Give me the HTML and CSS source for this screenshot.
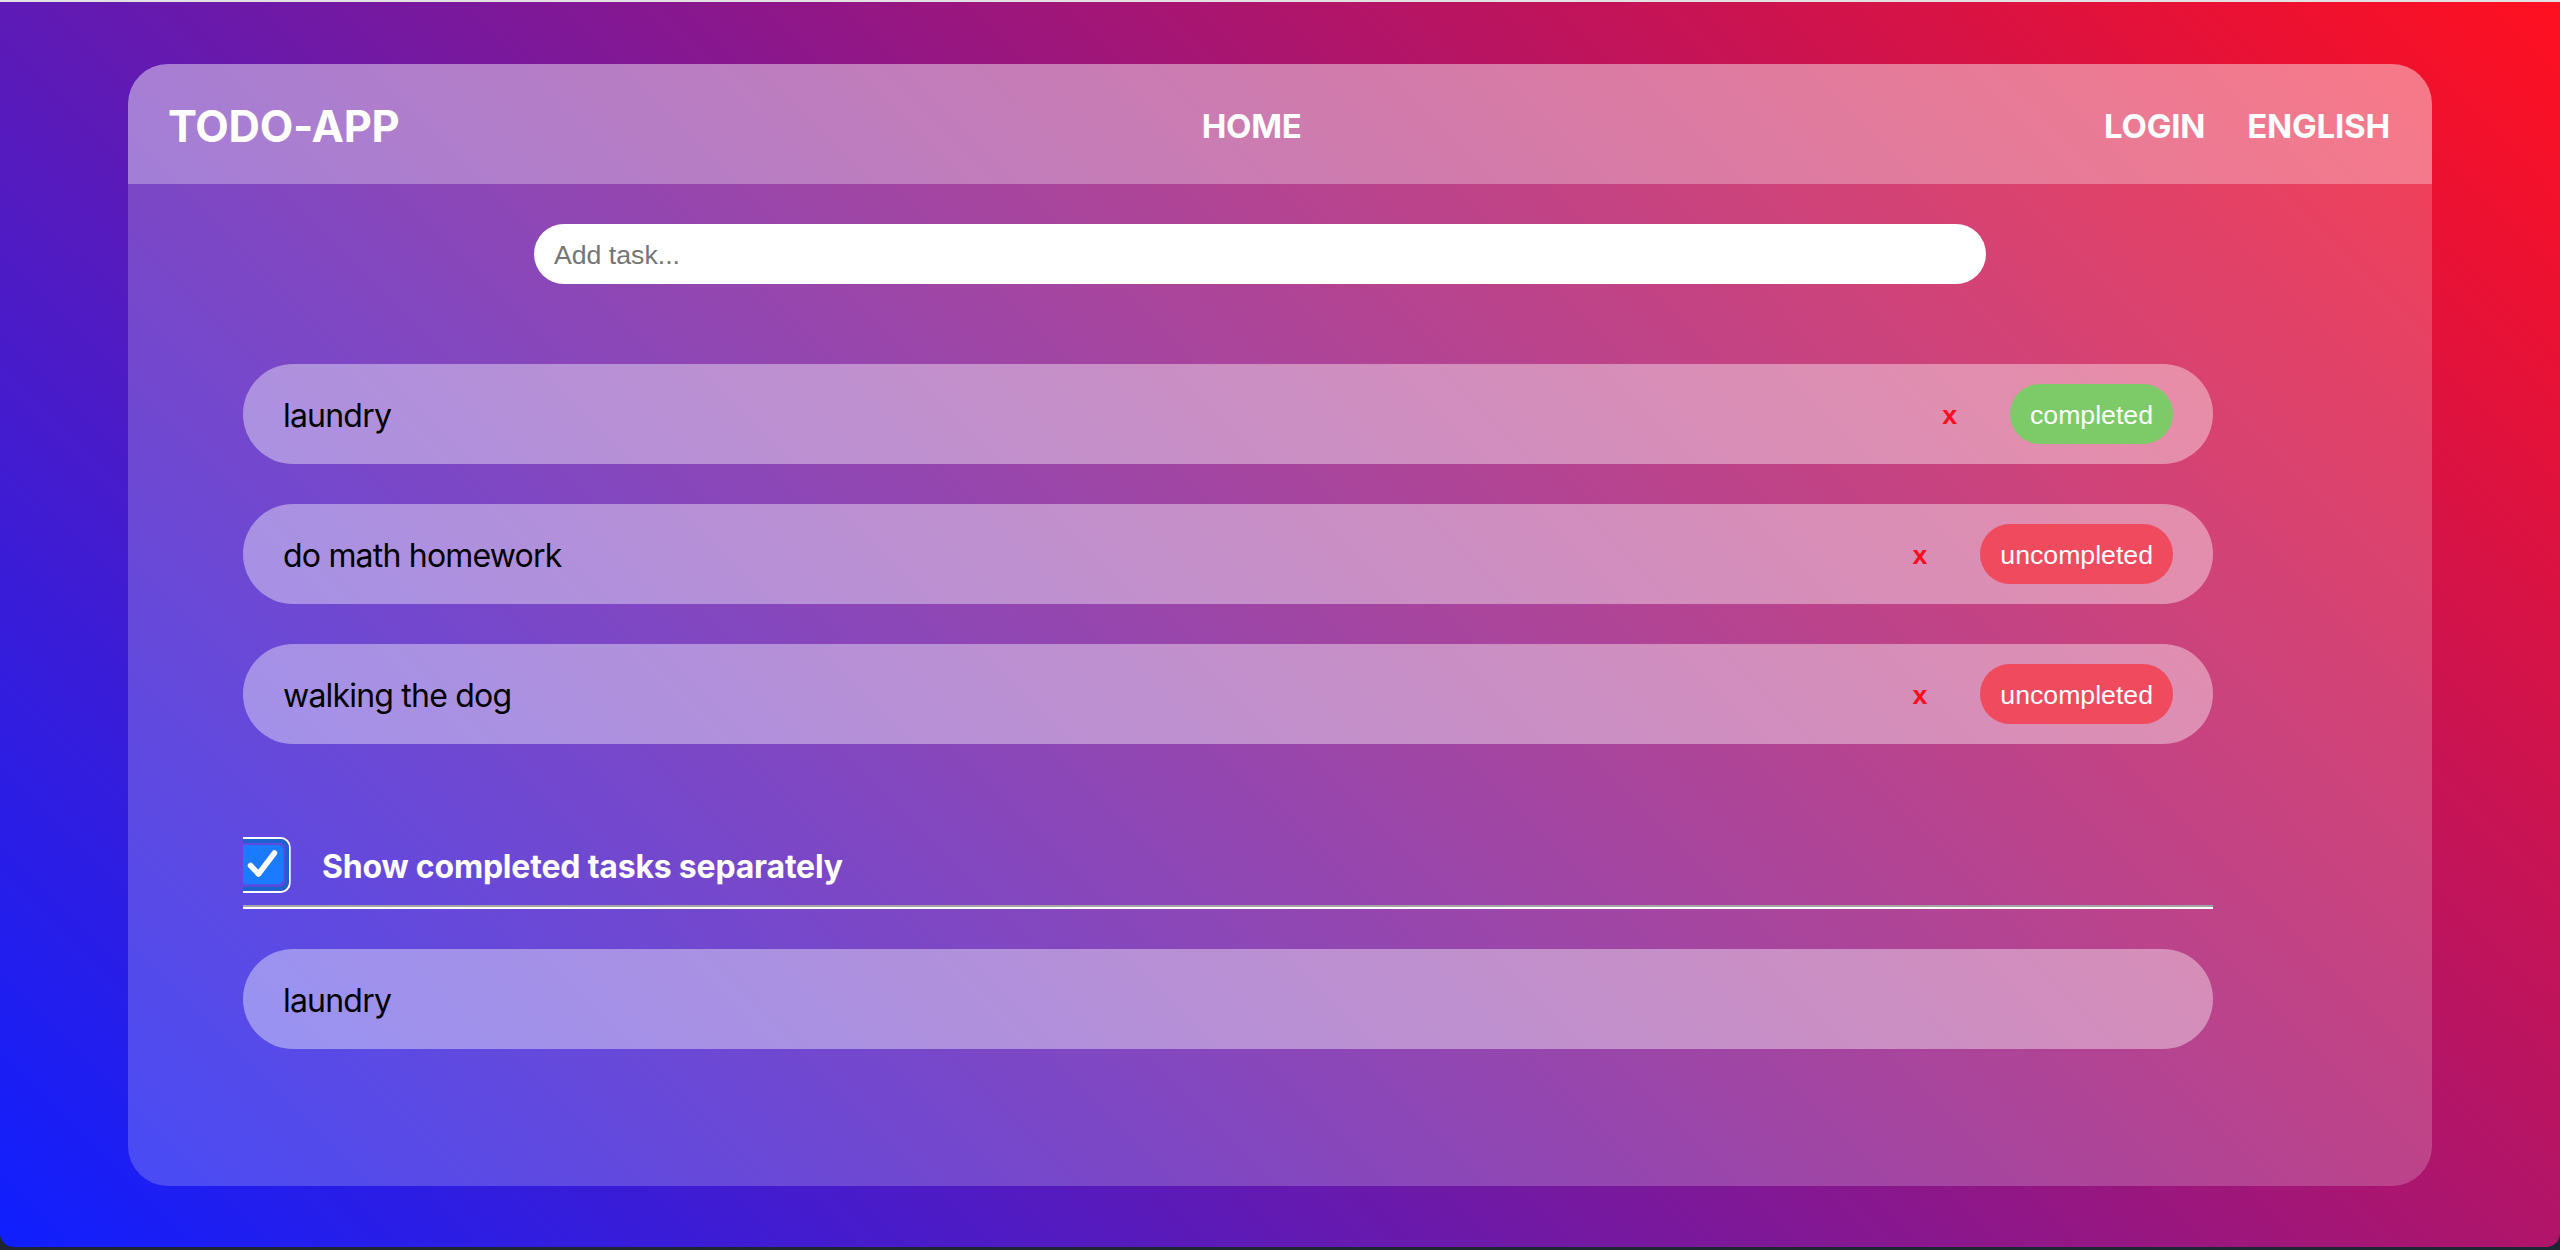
FILE: index.html
```html
<!DOCTYPE html>
<html lang="en">
<head>
<meta charset="utf-8">
<title>TODO-APP</title>
<link rel="stylesheet" href="styles.css">
</head>
<body>
<div class="chrome-top"></div>
<div class="window">
  <div class="card">
    <header class="nav">
      <div class="brand">TODO-APP</div>
      <a class="nav-link">HOME</a>
      <div class="nav-right">
        <a class="nav-link">LOGIN</a>
        <a class="nav-link">ENGLISH</a>
      </div>
    </header>
    <main class="content">
      <div class="add-row">
        <input class="add-input" type="text" placeholder="Add task...">
      </div>
      <ul class="task-list">
        <li class="task">
          <span class="task-text">laundry</span>
          <span class="task-delete">x</span>
          <span class="pill pill-done">completed</span>
        </li>
        <li class="task">
          <span class="task-text">do math homework</span>
          <span class="task-delete">x</span>
          <span class="pill pill-todo">uncompleted</span>
        </li>
        <li class="task">
          <span class="task-text">walking the dog</span>
          <span class="task-delete">x</span>
          <span class="pill pill-todo">uncompleted</span>
        </li>
      </ul>
      <label class="toggle">
        <svg class="check" width="48" height="56" viewBox="0 0 48 56">
          <rect x="-10" y="1" width="56.7" height="54" rx="9" fill="none" stroke="#ffffff" stroke-width="2"/>
          <rect x="-10" y="4" width="54" height="47.7" rx="7" fill="none" stroke="#1a62cc" stroke-width="4"/>
          <rect x="-6" y="8" width="46.3" height="39.3" rx="5" fill="#1b7bff"/>
          <path d="M7.5 28.5 L15.5 37 L31.5 16" fill="none" stroke="#ffffff" stroke-width="5.5" stroke-linecap="round" stroke-linejoin="round"/>
        </svg>
        <span class="toggle-label">Show completed tasks separately</span>
      </label>
      <hr class="divider">
      <ul class="task-list">
        <li class="task">
          <span class="task-text">laundry</span>
        </li>
      </ul>
    </main>
  </div>
</div>
</body>
</html>
```

FILE: styles.css
```css
* { box-sizing: border-box; }

html, body {
  margin: 0;
  padding: 0;
}

body {
  width: 2560px;
  height: 1250px;
  overflow: hidden;
  background: #1f2633;
  font-family: Inter, "Noto Sans", sans-serif;
}

.chrome-top {
  height: 2px;
  background: #e2e2e2;
}

.window {
  height: 1245px;
  background: linear-gradient(45deg, #0f1fff 0%, #ff1020 100%);
  border-radius: 0 0 14px 14px;
  display: flex;
  align-items: center;
  justify-content: center;
}

.card {
  width: 2304px;
  height: 1122px;
  margin-top: 1px;
  background: rgba(255, 255, 255, 0.2);
  border-radius: 40px;
  overflow: hidden;
  display: flex;
  flex-direction: column;
}

.nav {
  height: 120px;
  flex: none;
  background: rgba(255, 255, 255, 0.3);
  display: flex;
  align-items: center;
  justify-content: space-between;
  padding: 3px 42px 0 40px;
  color: #fff;
}

.brand {
  font-size: 43.5px;
  font-weight: 700;
  letter-spacing: -0.3px;
}

.nav-link {
  font-size: 33px;
  font-weight: 700;
  color: #fff;
  letter-spacing: -0.2px;
}

.nav-right {
  display: flex;
  gap: 42px;
}

.content {
  padding: 40px 0 0 115px;
  display: flex;
  flex-direction: column;
}

.add-row {
  padding-left: 291px;
}

.add-input {
  display: block;
  width: 1452px;
  height: 60px;
  border: none;
  outline: none;
  border-radius: 30px;
  background: #fff;
  padding: 3px 20px 0;
  font-family: "Liberation Sans", Arial, sans-serif;
  font-size: 26.67px;
  color: #000;
}

.add-input::placeholder {
  color: #757575;
}

.task-list {
  list-style: none;
  margin: 80px 0 0;
  padding: 0;
  width: 1970px;
  display: flex;
  flex-direction: column;
  gap: 40px;
}

.task {
  height: 100px;
  border-radius: 50px;
  background: rgba(255, 255, 255, 0.4);
  display: flex;
  align-items: center;
  padding: 0 40px 0 40px;
}

.task-text {
  flex: 1;
  font-size: 32px;
  letter-spacing: -0.8px;
  padding-top: 3px;
  color: #000;
}

.task-delete {
  font-family: "Liberation Sans", Arial, sans-serif;
  font-weight: 700;
  font-size: 26.67px;
  color: #ff0a1e;
  padding-top: 3px;
  margin-right: 53px;
}

.pill {
  height: 60px;
  border-radius: 30px;
  padding: 3px 20px 0;
  display: flex;
  align-items: center;
  font-family: "Liberation Sans", Arial, sans-serif;
  font-size: 26.67px;
  color: #fff;
}

.pill-done {
  background: #7dcb68;
}

.pill-todo {
  background: #ef4a5e;
}

.toggle {
  margin-top: 93px;
  height: 56px;
  display: flex;
  align-items: center;
  gap: 31px;
}

.check {
  display: block;
  flex: none;
}

.toggle-label {
  font-size: 32px;
  font-weight: 700;
  color: #fff;
  letter-spacing: -0.2px;
  padding-top: 2px;
}

.divider {
  width: 1970px;
  margin: 12px 0 0;
  height: 4px;
  border: none;
  border-top: 2px solid #a3a3a3;
  border-bottom: 2px solid #ffffff;
}

.divider + .task-list {
  margin-top: 40px;
}
```
